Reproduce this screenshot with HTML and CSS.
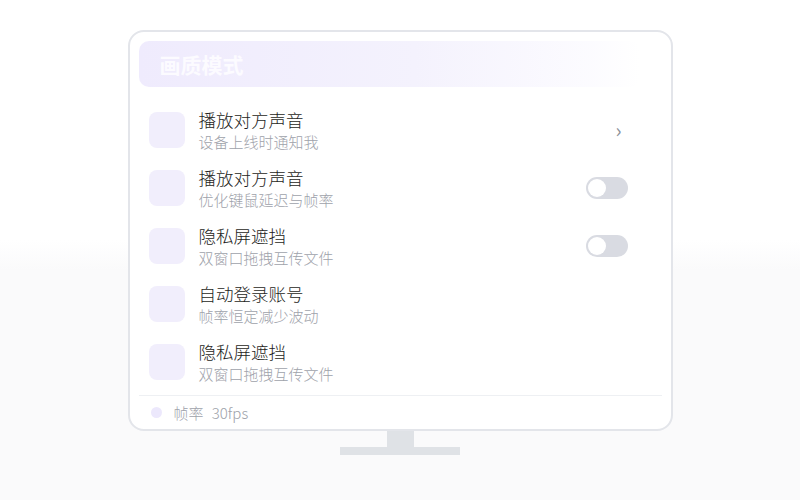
FILE: index.html
```html
<!DOCTYPE html>
<html lang="zh">
<head>
<meta charset="utf-8">
<link rel="stylesheet" href="styles.css">
</head>
<body>
<div class="stage">
  <div class="monitor">
    <div class="screen-head"><span class="screen-title">画质模式</span></div>
    <div class="list">
      <div class="row">
        <div class="ico"></div>
        <div class="txt"><div class="t">播放对方声音</div><div class="s">设备上线时通知我</div></div>
        <span class="chev">›</span>
      </div>
      <div class="row">
        <div class="ico"></div>
        <div class="txt"><div class="t">播放对方声音</div><div class="s">优化键鼠延迟与帧率</div></div>
        <span class="toggle"><span class="knob"></span></span>
      </div>
      <div class="row">
        <div class="ico"></div>
        <div class="txt"><div class="t">隐私屏遮挡</div><div class="s">双窗口拖拽互传文件</div></div>
        <span class="toggle"><span class="knob"></span></span>
      </div>
      <div class="row">
        <div class="ico"></div>
        <div class="txt"><div class="t">自动登录账号</div><div class="s">帧率恒定减少波动</div></div>
      </div>
      <div class="row">
        <div class="ico"></div>
        <div class="txt"><div class="t">隐私屏遮挡</div><div class="s">双窗口拖拽互传文件</div></div>
      </div>
    </div>
    <div class="foot"><span class="dot"></span><span class="foot-text">帧率 30fps</span></div>
  </div>
  <div class="neck"></div>
  <div class="base"></div>
</div>
</body>
</html>
```
FILE: styles.css
```css
html, body {
  margin: 0;
  padding: 0;
}
body {
  width: 800px;
  height: 500px;
  background: linear-gradient(to bottom, #ffffff 0px, #ffffff 240px, #fafafb 270px, #fafafb 100%);
  font-family: "Noto Sans CJK SC", "Noto Sans", sans-serif;
  overflow: hidden;
}
.stage {
  display: flex;
  flex-direction: column;
  align-items: center;
  padding-top: 30px;
}
.monitor {
  width: 545px;
  box-sizing: border-box;
  border: 2px solid #e3e5ea;
  border-radius: 16px;
  background: #ffffff;
  padding: 9px 9px 0 9px;
}
.screen-head {
  height: 46px;
  border-radius: 10px;
  background: linear-gradient(to right, #efebfd 0%, #f4f2fd 55%, rgba(250,249,255,0.6) 90%, rgba(255,255,255,0) 100%);
  display: flex;
  align-items: center;
  padding-left: 21px;
  margin-right: 22px;
}
.screen-title {
  font-size: 21px;
  color: #fcfbff;
  font-weight: 700;
}
.list {
  padding-top: 14px;
}
.row {
  height: 58px;
  display: flex;
  align-items: center;
  padding: 0 34px 0 10px;
}
.ico {
  width: 36px;
  height: 36px;
  border-radius: 8px;
  background: #f1eefc;
  flex: none;
}
.txt {
  flex: 1;
  margin-left: 14px;
}
.t {
  font-size: 17.5px;
  line-height: 22px;
  color: #1e1e22;
  font-weight: 300;
}
.s {
  font-size: 15px;
  line-height: 20px;
  margin-top: 1px;
  color: #9ea2aa;
  font-weight: 300;
}
.chev {
  font-size: 20px;
  color: #8a8f98;
  margin-right: 6px;
  line-height: 20px;
}
.toggle {
  width: 42px;
  height: 22px;
  border-radius: 11px;
  background: #d9dbe2;
  position: relative;
  flex: none;
}
.knob {
  position: absolute;
  left: 2px;
  top: 2px;
  width: 18px;
  height: 18px;
  border-radius: 50%;
  background: #ffffff;
}
.foot {
  margin-top: 4px;
  border-top: 1px solid #eef0f3;
  height: 33px;
  display: flex;
  align-items: center;
  padding-left: 12px;
}
.dot {
  width: 11px;
  height: 11px;
  border-radius: 50%;
  background: #ece8fc;
}
.foot-text {
  margin-left: 12px;
  font-size: 15px;
  color: #9ea2aa;
  font-weight: 300;
  word-spacing: 5px;
}
.neck {
  width: 27px;
  height: 16px;
  background: #dfe2e6;
}
.base {
  width: 120px;
  height: 8px;
  background: #dfe2e6;
}
```
